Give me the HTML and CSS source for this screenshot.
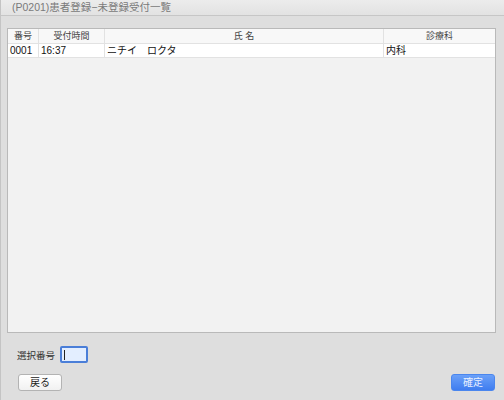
FILE: index.html
```html
<!DOCTYPE html>
<html lang="ja">
<head>
<meta charset="utf-8">
<title>(P0201)患者登録−未登録受付一覧</title>
<link rel="stylesheet" href="styles.css">
</head>
<body>
<div class="window">
  <div class="titlebar">(P0201)患者登録−未登録受付一覧</div>
  <div class="content">
    <div class="listbox">
      <div class="row head">
        <div class="cell c1">番号</div>
        <div class="cell c2">受付時間</div>
        <div class="cell c3">氏 名</div>
        <div class="cell c4">診療科</div>
      </div>
      <div class="row data">
        <div class="cell c1">0001</div>
        <div class="cell c2">16:37</div>
        <div class="cell c3">ニチイ　ロクタ</div>
        <div class="cell c4">内科</div>
      </div>
    </div>
    <div class="selrow">
      <span class="sellabel">選択番号</span>
      <span class="selinput"><span class="caret"></span></span>
    </div>
    <div class="btnrow">
      <button class="btn">戻る</button>
      <button class="btn primary">確定</button>
    </div>
  </div>
</div>
</body>
</html>
```
FILE: styles.css
```css
html, body {
  margin: 0;
  padding: 0;
  width: 504px;
  height: 400px;
  overflow: hidden;
  background: #dedede;
  font-family: "Liberation Sans", "Noto Sans CJK JP", sans-serif;
  font-size: 10px;
  color: #1a1a1a;
}
.window {
  height: 400px;
  box-sizing: border-box;
  border-left: 1px solid #c4c4c4;
  background: #dedede;
}
.titlebar {
  height: 16px;
  box-sizing: border-box;
  border-bottom: 1px solid #c6c6c6;
  background: linear-gradient(#ececec, #e2e2e2);
  padding-left: 11px;
  font-size: 10.5px;
  line-height: 15px;
  color: #7a7a7a;
}
.content {
  padding: 12px 8px 0 6px;
}
.listbox {
  height: 305px;
  box-sizing: border-box;
  border: 1px solid #b9b9b9;
  background: #f2f2f2;
}
.row {
  display: grid;
  grid-template-columns: 31px 66px 279px 1fr;
}
.cell {
  box-sizing: border-box;
  border-right: 1px solid #e2e2e2;
  border-bottom: 1px solid #e2e2e2;
  white-space: nowrap;
  overflow: hidden;
}
.cell.c4 { border-right: none; }
.head {
  background: #f8f8f8;
  height: 15px;
}
.head .cell {
  text-align: center;
  font-size: 9px;
  line-height: 14px;
  color: #444;
}
.data {
  background: #fff;
  height: 14px;
}
.data .cell {
  line-height: 13px;
  padding-left: 2px;
  color: #111;
}
.selrow {
  display: flex;
  align-items: center;
  margin-top: 13px;
  padding-left: 10px;
  height: 17px;
}
.sellabel {
  font-size: 9.5px;
  color: #333;
  margin-right: 5px;
}
.selinput {
  display: flex;
  align-items: center;
  width: 28px;
  height: 17px;
  box-sizing: border-box;
  border: 2px solid #4a7ed8;
  border-radius: 2px;
  background: #e3eeff;
  padding: 0 2px;
}
.caret {
  width: 1px;
  height: 10px;
  background: #222;
}
.btnrow {
  display: flex;
  justify-content: space-between;
  margin-top: 11px;
  padding-left: 11px;
  padding-right: 1px;
}
.btn {
  width: 44px;
  height: 17px;
  box-sizing: border-box;
  border: 1px solid #b3b3b3;
  border-radius: 3px;
  background: linear-gradient(#ffffff, #f1f1f1);
  font-family: "Liberation Sans", "Noto Sans CJK JP", sans-serif;
  font-size: 10px;
  color: #222;
  padding: 0;
  margin: 0;
  line-height: 15px;
}
.btn.primary {
  border-color: #4a86ee;
  background: linear-gradient(#6aa0f8, #3f7df0);
  color: #eaf1ff;
}
```
